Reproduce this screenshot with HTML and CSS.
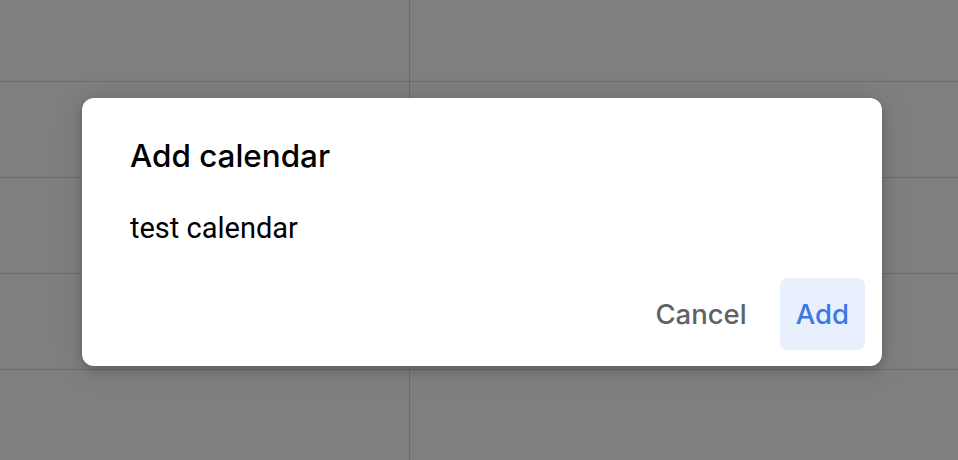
FILE: index.html
```html
<!DOCTYPE html>
<html>
<head>
<meta charset="utf-8">
<link rel="stylesheet" href="styles.css">
</head>
<body>
<div class="grid">
  <div class="cell top"></div><div class="cell top right"></div>
  <div class="cell"></div><div class="cell right"></div>
  <div class="cell"></div><div class="cell right"></div>
  <div class="cell"></div><div class="cell right"></div>
  <div class="cell last"></div><div class="cell last right"></div>
</div>
<div class="scrim"></div>
<div class="dialog">
  <h2 class="title">Add calendar</h2>
  <p class="body">test calendar</p>
  <div class="actions">
    <button class="btn cancel">Cancel</button>
    <button class="btn add">Add</button>
  </div>
</div>
</body>
</html>
```
FILE: styles.css
```css
html, body {
  margin: 0;
  padding: 0;
  width: 958px;
  height: 460px;
  overflow: hidden;
  background: #ffffff;
}
.grid {
  display: grid;
  grid-template-columns: 410px 1fr;
  grid-template-rows: 82px 96px 96px 96px 1fr;
  height: 460px;
}
.cell {
  border-bottom: 1px solid #d8d8d8;
  border-right: 1px solid #d8d8d8;
}
.cell.right { border-right: none; }
.cell.last { border-bottom: none; }
.scrim {
  position: absolute;
  inset: 0;
  background: rgba(0, 0, 0, 0.5);
}
.dialog {
  position: absolute;
  left: 82px;
  top: 98px;
  width: 800px;
  height: 268px;
  box-sizing: border-box;
  background: #ffffff;
  border-radius: 12px;
  box-shadow: 0 4px 10px rgba(0, 0, 0, 0.18), 0 2px 30px rgba(0, 0, 0, 0.12);
  padding: 38px 17px 16px 48px;
  display: flex;
  flex-direction: column;
}
.title {
  margin: 0;
  font-family: Inter, sans-serif;
  font-weight: 500;
  font-size: 31.4px;
  line-height: 40px;
  color: #000000;
}
.body {
  margin: 34px 0 0 0;
  font-family: Roboto, sans-serif;
  font-size: 29px;
  line-height: 36px;
  color: #000000;
}
.actions {
  margin-top: auto;
  display: flex;
  justify-content: flex-end;
}
.btn {
  border: none;
  background: transparent;
  font-family: Inter, sans-serif;
  font-weight: 500;
  font-size: 27.5px;
  height: 72px;
  padding: 0 16px;
  border-radius: 8px;
  cursor: pointer;
}
.cancel {
  color: #5f6368;
  margin-right: 17px;
}
.add {
  color: #3b78e7;
  background: #e8f0fe;
}
```
